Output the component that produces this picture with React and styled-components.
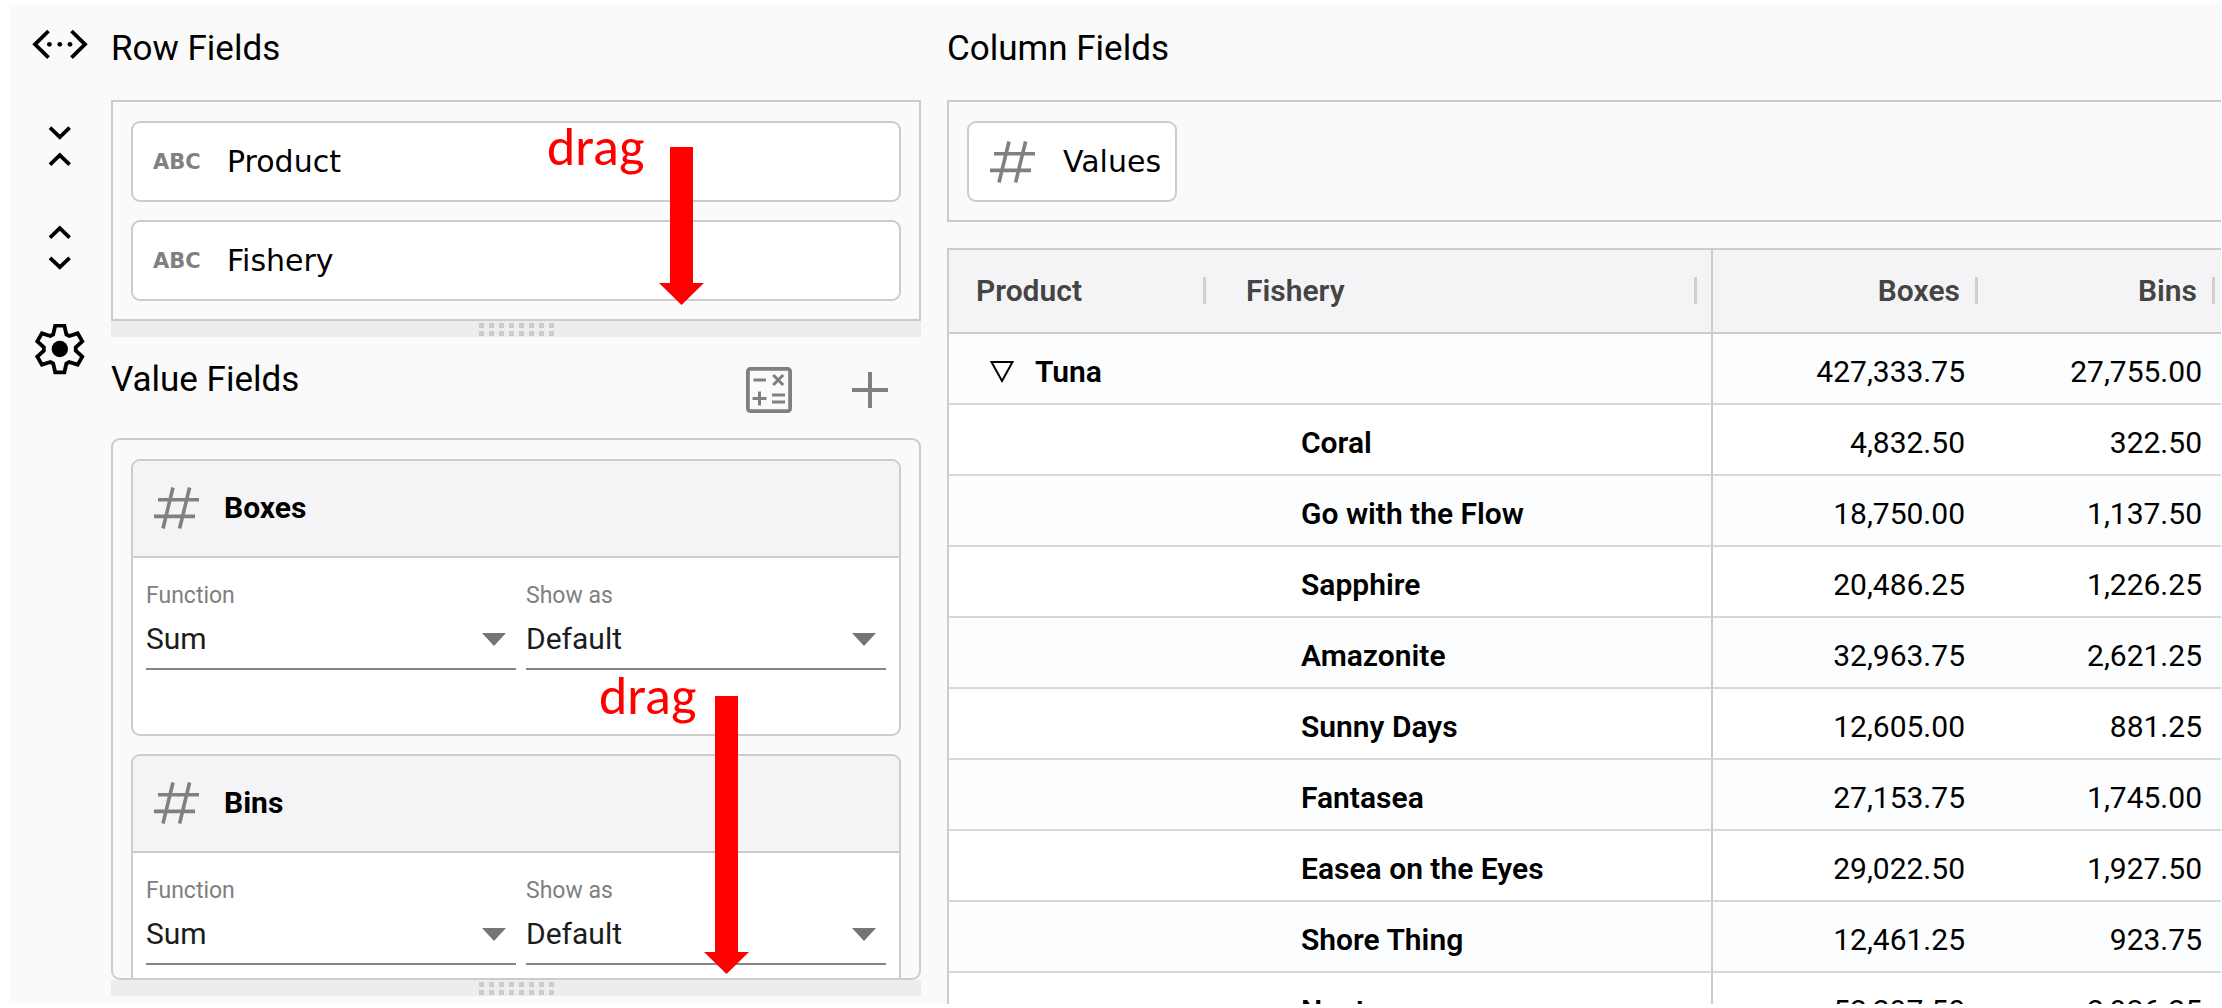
import React from "react";
import styled, { createGlobalStyle } from "styled-components";

const GlobalStyle = createGlobalStyle`
  *, *::before, *::after { box-sizing: border-box; }
  body {
    margin: 0;
    background: #fff;
    color: #000;
    font-family: Roboto, "Liberation Sans", sans-serif;
    font-size: 30px;
  }
`;

const line = "#cccccc";
const glyph = "#808080";

const Page = styled.div`
  position: relative;
  height: 100vh;
  padding: 4px 1px 4px 9px;
  overflow: hidden;
`;

const Shell = styled.div`
  display: flex;
  height: 100%;
  background: #fafafa;
  overflow: hidden;
`;

const Rail = styled.nav`
  display: flex;
  flex: 0 0 102px;
  flex-direction: column;
  align-items: center;
  gap: 50px;
  padding-top: 14px;
`;

const IconButton = styled.button`
  display: block;
  padding: 0;
  border: 0;
  background: none;
  color: ${(p) => p.$color || "#000"};
  cursor: pointer;
  svg { display: block; }
`;

const Sidebar = styled.aside`
  display: flex;
  flex: 0 0 810px;
  flex-direction: column;
  padding-bottom: 8px;
`;

const Main = styled.main`
  flex: 1;
  min-width: 0;
  margin-left: 26px;
`;

const SectionHeader = styled.header`
  display: flex;
  justify-content: space-between;
  align-items: flex-start;
  flex: none;
  padding: ${(p) => p.$padding || "24px 0 30px"};
`;

const Title = styled.h2`
  margin: 0;
  font-size: 35px;
  font-weight: 400;
  line-height: 42px;
`;

const Tools = styled.div`
  display: flex;
  gap: 55px;
  padding-top: 8px;
`;

const FieldBox = styled.div`
  display: flex;
  flex-direction: ${(p) => (p.$row ? "row" : "column")};
  gap: 18px;
  padding: 19px 18px 18px;
  border: 2px solid ${line};
  ${(p) => p.$openRight && "border-right: 0;"}
`;

const Chip = styled.div`
  display: flex;
  align-items: center;
  gap: 27px;
  height: 81px;
  padding: 0 14px 0 20px;
  border: 2px solid ${line};
  border-radius: 9px;
  background: #fff;
  font-family: Verdana, "DejaVu Sans", sans-serif;
`;

const TypeMark = styled.span`
  width: 47px;
  color: ${glyph};
  font: 700 21px/24px "DejaVu Sans", sans-serif;
  svg { display: block; }
`;

const Splitter = styled.div`
  display: flex;
  flex: none;
  justify-content: center;
  align-items: center;
  height: 16px;
  background: #ededed;
  cursor: row-resize;
`;

const Grip = styled.div`
  display: grid;
  grid-template-columns: repeat(8, 5px);
  gap: 3px 5px;
`;

const GripDot = styled.i`
  height: 5px;
  background: #cbcbcb;
`;

const ValueList = styled.div`
  display: flex;
  flex: 1;
  flex-direction: column;
  gap: 18px;
  min-height: 0;
  padding: 19px 18px 0;
  border: 2px solid ${line};
  border-radius: 9px;
  overflow: hidden;
`;

const Card = styled.section`
  flex: none;
  border: 2px solid ${line};
  border-radius: 9px;
  background: #fff;
  overflow: hidden;
`;

const CardHeader = styled.header`
  display: flex;
  align-items: center;
  gap: 24px;
  height: 97px;
  padding: 0 20px 2px;
  border-bottom: 2px solid ${line};
  background: #f4f4f6;
`;

const CardTitle = styled.h3`
  margin: 0;
  font-size: 30px;
  font-weight: 700;
  line-height: 36px;
`;

const CardBody = styled.div`
  display: grid;
  grid-template-columns: 37fr 36fr;
  gap: 10px;
  padding: 24px 13px 64px;
`;

const FieldLabel = styled.label`
  display: block;
  color: #808080;
  font-size: 23px;
  line-height: 28px;
`;

const SelectWrap = styled.div`
  display: grid;
  align-items: center;
  &::after {
    content: "";
    grid-area: 1 / 1;
    justify-self: end;
    margin: 0 10px 2px 0;
    border: 12px solid transparent;
    border-top: 13px solid #757575;
    border-bottom: 0;
    pointer-events: none;
  }
`;

const Select = styled.select`
  grid-area: 1 / 1;
  width: 100%;
  height: 60px;
  padding: 0 0 2px;
  border: 0;
  border-bottom: 2px solid #858585;
  border-radius: 0;
  background: none;
  color: #1c1c1c;
  font: inherit;
  appearance: none;
`;

const Table = styled.table`
  width: 100%;
  margin-top: 26px;
  border: 2px solid ${line};
  border-width: 2px 0 0 2px;
  border-spacing: 0;
  table-layout: fixed;
  background: #fff;
`;

const Col = styled.col`
  width: ${(p) => p.$width || "auto"};
`;

const HeadCell = styled.th`
  height: 84px;
  padding: 0 ${(p) => p.$right || "6px"} 0 ${(p) => p.$left || "0"};
  border-bottom: 2px solid ${line};
  ${(p) => p.$divider && `border-right: 2px solid ${line};`}
  background: #f4f4f6;
  color: #444;
  font-weight: 600;
  text-align: left;
`;

const HeadContent = styled.div`
  display: flex;
  align-items: center;
  justify-content: ${(p) => (p.$end ? "flex-end" : "space-between")};
  gap: 15px;
  padding-bottom: 2px;
  &::after {
    content: "";
    width: 3px;
    height: 27px;
    background: #d0d0d0;
  }
`;

const Row = styled.tr`
  background: ${(p) => (p.$tinted ? "#fcfdfe" : "#fff")};
`;

const Cell = styled.td`
  height: 71px;
  padding: ${(p) => p.$padding || "6px 19px 0 0"};
  border-bottom: 2px solid #d6d9dc;
  ${(p) => p.$divider && `border-right: 2px solid ${line};`}
  font-weight: ${(p) => (p.$strong ? 600 : 400)};
  text-align: ${(p) => (p.$strong ? "left" : "right")};
  white-space: nowrap;
`;

const Group = styled.div`
  display: flex;
  align-items: center;
  gap: 20px;
`;

const Note = styled.span`
  position: absolute;
  left: ${(p) => p.$x}px;
  top: ${(p) => p.$y}px;
  color: #f00;
  font: 400 54px/60px Carlito, Lato, sans-serif;
  pointer-events: none;
`;

const ArrowMark = styled.svg`
  position: absolute;
  left: ${(p) => p.$x}px;
  top: ${(p) => p.$y}px;
  pointer-events: none;
`;

function DownArrow({ x, y, length }) {
  const neck = length - 22;
  return (
    <ArrowMark $x={x} $y={y} width="45" height={length} aria-hidden="true">
      <path
        d={`M11 0H34V${neck}H45L22.5 ${length}L0 ${neck}H11Z`}
        fill="#f00"
      />
    </ArrowMark>
  );
}

const RailIcon = ({ children }) => (
  <svg width="60" height="52" viewBox="0 0 60 52" fill="none" stroke="currentColor" strokeWidth="3.8" aria-hidden="true">
    {children}
  </svg>
);

const gearPoints = Array.from({ length: 6 }, (_, k) => {
  const a = (k * Math.PI) / 3;
  return [[-6.6, -14.6], [-4.6, -23.3], [4.6, -23.3], [6.6, -14.6]]
    .map(([x, y]) => {
      const px = 29.8 + x * Math.cos(a) - y * Math.sin(a);
      const py = 25 + x * Math.sin(a) + y * Math.cos(a);
      return `${px.toFixed(2)},${py.toFixed(2)}`;
    })
    .join(" ");
}).join(" ");

const HashIcon = () => (
  <svg width="47" height="42" viewBox="0 0 47 42" fill="none" stroke="currentColor" strokeWidth="3.6" aria-hidden="true">
    <path d="M5 12.8H46M1 29.4H42M20 .5L10 41.5M36.6 .5L26.6 41.5" />
  </svg>
);

const CalcIcon = () => (
  <svg width="46" height="46" viewBox="0 0 46 46" fill="none" stroke="currentColor" strokeWidth="3" aria-hidden="true">
    <rect x="1.9" y="1.9" width="42.2" height="42.2" rx="2.5" strokeWidth="3.8" />
    <path d="M7.5 13H20M27.2 8L37.2 18M37.2 8L27.2 18M6.5 31.6H20.5M13.5 24.6V38.6M26 28H39M26 35H39" />
  </svg>
);

const PlusIcon = () => (
  <svg width="46" height="46" viewBox="0 0 46 46" fill="none" stroke="currentColor" strokeWidth="4" aria-hidden="true">
    <path d="M23 5V41M5 23H41" />
  </svg>
);

const TriangleIcon = () => (
  <svg width="26" height="24" viewBox="0 0 26 24" fill="none" stroke="currentColor" strokeWidth="2" aria-hidden="true">
    <path d="M2.5 2H23.5L13 21Z" />
  </svg>
);

function SplitBar() {
  return (
    <Splitter role="separator" aria-orientation="horizontal">
      <Grip>
        {Array.from({ length: 16 }, (_, i) => (
          <GripDot key={i} />
        ))}
      </Grip>
    </Splitter>
  );
}

function FieldChip({ name, numeric }) {
  return (
    <Chip>
      <TypeMark>{numeric ? <HashIcon /> : "ABC"}</TypeMark>
      {name}
    </Chip>
  );
}

function Dropdown({ id, label, value }) {
  return (
    <div>
      <FieldLabel htmlFor={id}>{label}</FieldLabel>
      <SelectWrap>
        <Select id={id} defaultValue={value}>
          <option>{value}</option>
        </Select>
      </SelectWrap>
    </div>
  );
}

function ValueCard({ name }) {
  return (
    <Card>
      <CardHeader>
        <TypeMark>
          <HashIcon />
        </TypeMark>
        <CardTitle>{name}</CardTitle>
      </CardHeader>
      <CardBody>
        <Dropdown id={`${name}-function`} label="Function" value="Sum" />
        <Dropdown id={`${name}-show-as`} label="Show as" value="Default" />
      </CardBody>
    </Card>
  );
}

const rows = [
  ["Coral", "4,832.50", "322.50"],
  ["Go with the Flow", "18,750.00", "1,137.50"],
  ["Sapphire", "20,486.25", "1,226.25"],
  ["Amazonite", "32,963.75", "2,621.25"],
  ["Sunny Days", "12,605.00", "881.25"],
  ["Fantasea", "27,153.75", "1,745.00"],
  ["Easea on the Eyes", "29,022.50", "1,927.50"],
  ["Shore Thing", "12,461.25", "923.75"],
  ["Neptune", "52,297.50", "2,936.25"],
];

function PivotTable() {
  return (
    <Table>
      <colgroup>
        <Col $width="260px" />
        <Col />
        <Col $width="271px" />
        <Col $width="237px" />
      </colgroup>
      <thead>
        <tr>
          <HeadCell $left="27px" $right="3px">
            <HeadContent>Product</HeadContent>
          </HeadCell>
          <HeadCell $left="37px" $right="14px" $divider>
            <HeadContent>Fishery</HeadContent>
          </HeadCell>
          <HeadCell>
            <HeadContent $end>Boxes</HeadContent>
          </HeadCell>
          <HeadCell>
            <HeadContent $end>Bins</HeadContent>
          </HeadCell>
        </tr>
      </thead>
      <tbody>
        <Row $tinted>
          <Cell $strong $divider colSpan={2} $padding="6px 0 0 40px">
            <Group>
              <IconButton aria-label="Collapse Tuna">
                <TriangleIcon />
              </IconButton>
              Tuna
            </Group>
          </Cell>
          <Cell>427,333.75</Cell>
          <Cell>27,755.00</Cell>
        </Row>
        {rows.map(([name, boxes, bins], i) => (
          <Row key={name} $tinted={i % 2 === 1}>
            <Cell />
            <Cell $strong $divider $padding="6px 0 0 92px">
              {name}
            </Cell>
            <Cell>{boxes}</Cell>
            <Cell>{bins}</Cell>
          </Row>
        ))}
      </tbody>
    </Table>
  );
}

export default function App() {
  return (
    <Page>
      <GlobalStyle />
      <Shell>
        <Rail>
          <IconButton aria-label="Fit width">
            <RailIcon>
              <path d="M18.5 13L5 26.3L18.5 39.6M41.5 13L55 26.3L41.5 39.6" />
              <g fill="currentColor" stroke="none">
                <circle cx="19.4" cy="26.3" r="2.4" />
                <circle cx="29.8" cy="26.3" r="2.4" />
                <circle cx="40" cy="26.3" r="2.4" />
              </g>
            </RailIcon>
          </IconButton>
          <IconButton aria-label="Collapse all">
            <RailIcon>
              <path d="M20 7.6L29.8 17L39.6 7.6M20 44.6L29.8 35.2L39.6 44.6" />
            </RailIcon>
          </IconButton>
          <IconButton aria-label="Expand all">
            <RailIcon>
              <path d="M20 15.6L29.8 6.2L39.6 15.6M20 35.8L29.8 45.2L39.6 35.8" />
            </RailIcon>
          </IconButton>
          <IconButton aria-label="Settings">
            <RailIcon>
              <polygon points={gearPoints} />
              <circle cx="29.8" cy="25" r="8.2" fill="currentColor" stroke="none" />
            </RailIcon>
          </IconButton>
        </Rail>
        <Sidebar>
          <SectionHeader>
            <Title>Row Fields</Title>
          </SectionHeader>
          <FieldBox>
            <FieldChip name="Product" />
            <FieldChip name="Fishery" />
          </FieldBox>
          <SplitBar />
          <SectionHeader $padding="22px 28px 25px 0">
            <Title>Value Fields</Title>
            <Tools>
              <IconButton $color={glyph} aria-label="Calculated field">
                <CalcIcon />
              </IconButton>
              <IconButton $color={glyph} aria-label="Add value field">
                <PlusIcon />
              </IconButton>
            </Tools>
          </SectionHeader>
          <ValueList>
            <ValueCard name="Boxes" />
            <ValueCard name="Bins" />
          </ValueList>
          <SplitBar />
        </Sidebar>
        <Main>
          <SectionHeader>
            <Title>Column Fields</Title>
          </SectionHeader>
          <FieldBox $row $openRight>
            <FieldChip name="Values" numeric />
          </FieldBox>
          <PivotTable />
        </Main>
      </Shell>
      <Note $x={547} $y={117}>drag</Note>
      <DownArrow x={659} y={147} length={158} />
      <Note $x={599} $y={666}>drag</Note>
      <DownArrow x={704} y={696} length={278} />
    </Page>
  );
}
